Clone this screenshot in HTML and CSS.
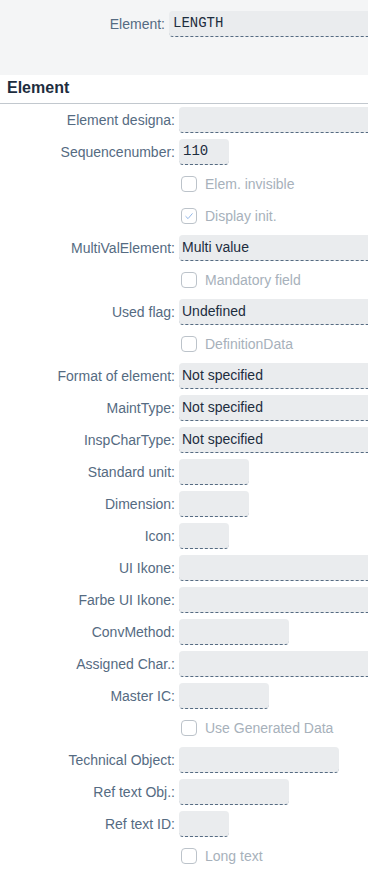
FILE: index.html
```html
<!DOCTYPE html>
<html>
<head>
<meta charset="utf-8">
<link rel="stylesheet" href="styles.css">
</head>
<body>
<header class="objhead">
  <div class="hrow">
    <span class="hlabel">Element:</span>
    <div class="field wide mono">LENGTH</div>
  </div>
</header>
<section class="section">
  <h2 class="title">Element</h2>
  <div class="form">
    <label class="lbl">Element designa:</label><div class="field wide"></div>
    <label class="lbl">Sequencenumber:</label><div class="field w50 mono">110</div>
    <span></span><div class="check"><span class="box"></span><span class="ctext">Elem. invisible</span></div>
    <span></span><div class="check"><span class="box checked"><svg viewBox="0 0 16 16" width="14" height="14"><path d="M4 8.2 L6.9 11 L12 5" fill="none" stroke="#8fb4e6" stroke-width="1.1"/></svg></span><span class="ctext">Display init.</span></div>
    <label class="lbl">MultiValElement:</label><div class="field wide">Multi value</div>
    <span></span><div class="check"><span class="box"></span><span class="ctext">Mandatory field</span></div>
    <label class="lbl">Used flag:</label><div class="field wide">Undefined</div>
    <span></span><div class="check"><span class="box"></span><span class="ctext">DefinitionData</span></div>
    <label class="lbl">Format of element:</label><div class="field wide">Not specified</div>
    <label class="lbl">MaintType:</label><div class="field wide">Not specified</div>
    <label class="lbl">InspCharType:</label><div class="field wide">Not specified</div>
    <label class="lbl">Standard unit:</label><div class="field w70"></div>
    <label class="lbl">Dimension:</label><div class="field w70"></div>
    <label class="lbl">Icon:</label><div class="field w50"></div>
    <label class="lbl">UI Ikone:</label><div class="field wide"></div>
    <label class="lbl">Farbe UI Ikone:</label><div class="field wide"></div>
    <label class="lbl">ConvMethod:</label><div class="field w110"></div>
    <label class="lbl">Assigned Char.:</label><div class="field wide"></div>
    <label class="lbl">Master IC:</label><div class="field w90"></div>
    <span></span><div class="check"><span class="box"></span><span class="ctext">Use Generated Data</span></div>
    <label class="lbl">Technical Object:</label><div class="field w160"></div>
    <label class="lbl">Ref text Obj.:</label><div class="field w110"></div>
    <label class="lbl">Ref text ID:</label><div class="field w50"></div>
    <span></span><div class="check"><span class="box"></span><span class="ctext">Long text</span></div>
  </div>
</section>
</body>
</html>
```

FILE: styles.css
```css
html, body {
  margin: 0;
  padding: 0;
  background: #ffffff;
  overflow: hidden;
}
body {
  width: 368px;
  font-family: "Liberation Sans", Arial, sans-serif;
  font-size: 14px;
  color: #1d2d3e;
}
.objhead {
  background: #f4f5f6;
  height: 75px;
  box-sizing: border-box;
  padding-top: 11px;
}
.hrow {
  display: grid;
  grid-template-columns: 165px 1fr;
  column-gap: 4px;
  align-items: center;
}
.hlabel {
  text-align: right;
  color: #556b82;
}
.section {
  background: #ffffff;
}
.title {
  margin: 0;
  height: 29px;
  box-sizing: border-box;
  padding: 2px 7px 0;
  font-size: 16px;
  font-weight: bold;
  line-height: 22px;
  color: #1d2d3e;
  border-bottom: 1px solid #c2c8ce;
}
.form {
  display: grid;
  grid-template-columns: 175px 1fr;
  column-gap: 4px;
  grid-auto-rows: 32px;
  align-items: center;
}
.lbl {
  text-align: right;
  color: #556b82;
  white-space: nowrap;
}
.field {
  height: 26px;
  box-sizing: border-box;
  background: #eaecee;
  border-radius: 4px;
  border-bottom: 1px dashed #556b82;
  padding: 0 3px;
  line-height: 25px;
  color: #1d2d3e;
  white-space: nowrap;
  overflow: hidden;
}
.wide { margin-right: -12px; }
.w50 { width: 50px; }
.w70 { width: 70px; }
.w90 { width: 90px; }
.w110 { width: 110px; }
.w160 { width: 160px; }
.mono {
  font-family: "Liberation Mono", "DejaVu Sans Mono", monospace;
  font-size: 14px;
  padding-left: 4px;
}
.check {
  display: flex;
  align-items: center;
  padding-left: 2px;
}
.box {
  width: 16px;
  height: 16px;
  box-sizing: border-box;
  border: 1px solid #bcc3ca;
  border-radius: 4px;
  background: #ffffff;
  display: flex;
  align-items: center;
  justify-content: center;
}
.ctext {
  margin-left: 8px;
  color: #a7b1bb;
}
```
